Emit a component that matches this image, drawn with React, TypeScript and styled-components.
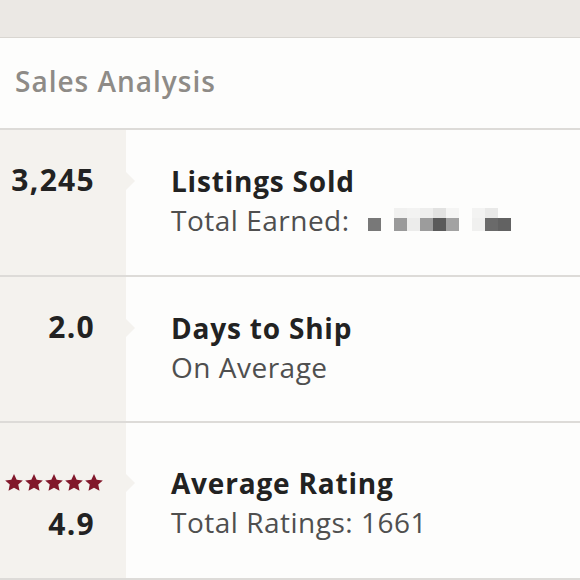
import React from 'react';
import styled, { createGlobalStyle } from 'styled-components';

const GlobalStyle = createGlobalStyle`
    html, body {
        margin: 0;
        padding: 0;
        background: #ffffff;
    }
    body {
        font-family: "Open Sans", Lato, Arial, sans-serif;
        -webkit-font-smoothing: antialiased;
    }
    * {
        box-sizing: border-box;
    }
`

const StyledPage = styled.div`
    width: 580px;
    height: 580px;
    overflow: hidden;
    display: flex;
    flex-direction: column;
`

const StyledTopBand = styled.div`
    height: 38px;
    flex-shrink: 0;
    background: #ebe8e4;
    border-bottom: 1px solid #d9d6d1;
`

const StyledHeader = styled.div`
    height: 92px;
    flex-shrink: 0;
    display: flex;
    align-items: center;
    padding: 0 0 4px 15px;
    background: #fdfdfc;
    border-bottom: 2px solid #dddbd8;
    font-size: 28px;
    font-weight: 600;
    letter-spacing: 1px;
    color: #8e8b87;
`

const StyledRow = styled.div<{ $height: number }>`
    display: grid;
    grid-template-columns: 126px 1fr;
    height: ${p => p.$height}px;
    border-bottom: 2px solid #dddbd8;
    flex-shrink: 0;
`

const StyledStatCell = styled.div<{ $top: number }>`
    position: relative;
    background: #f4f2ee;
    padding: ${p => p.$top}px 31px 0 0;
    text-align: right;

    &::after {
        content: '';
        position: absolute;
        right: -9px;
        top: ${p => p.$top + 12}px;
        border-top: 9px solid transparent;
        border-bottom: 9px solid transparent;
        border-left: 9px solid #f4f2ee;
    }
`

const StyledNumber = styled.div`
    font-size: 30px;
    font-weight: 700;
    line-height: 40px;
    letter-spacing: 1.3px;
    color: #222;
`

const StyledStars = styled.div`
    display: flex;
    justify-content: flex-end;
    margin-right: -9px;
    height: 42px;
    align-items: center;
`

const StyledInfoCell = styled.div<{ $top: number }>`
    padding: ${p => p.$top}px 0 0 45px;
    background: #fdfdfc;
`

const StyledTitle = styled.div`
    font-size: 28px;
    font-weight: 700;
    line-height: 42px;
    letter-spacing: 0.8px;
    color: #222;
`

const StyledSubtitle = styled.div`
    display: flex;
    align-items: center;
    font-size: 28px;
    font-weight: 400;
    line-height: 36px;
    letter-spacing: 0.5px;
    color: #4f4f4f;
`

const StyledMosaic = styled.div`
    display: grid;
    grid-template-columns: repeat(11, 13px);
    grid-template-rows: 10px 13px;
    margin-left: 18px;
    margin-top: -2px;
`

const StyledPixel = styled.span<{ $shade: string }>`
    background: ${p => p.$shade};
`

const mosaic = [
    '#fdfdfc', '#fdfdfc', '#f1f1f0', '#f3f3f2', '#eeeeed', '#e2e2e1', '#f5f5f4', '#fdfdfc', '#f3f3f2', '#e9e9e8', '#fdfdfc',
    '#787878', '#fdfdfc', '#9a9a9a', '#ececeb', '#9c9c9c', '#5a5a5a', '#a2a2a2', '#fdfdfc', '#f0f0ef', '#6a6a6a', '#626262',
]

const Star = () => (
    <svg width="20" height="20" viewBox="0 0 24 24">
        <path d="M12 1.2l3.2 6.8 7.4.9-5.5 5 1.5 7.4L12 17.6l-6.6 3.7 1.5-7.4-5.5-5 7.4-.9z" fill="#82192c" />
    </svg>
)

type Stat = {
    value: string;
    title: string;
    subtitle: string;
    height: number;
    top: number;
    stars?: boolean;
    redacted?: boolean;
}

const stats: Stat[] = [
    { value: '3,245', title: 'Listings Sold', subtitle: 'Total Earned:', height: 147, top: 30, redacted: true },
    { value: '2.0', title: 'Days to Ship', subtitle: 'On Average', height: 146, top: 30 },
    { value: '4.9', title: 'Average Rating', subtitle: 'Total Ratings: 1661', height: 157, top: 39, stars: true },
]

const App = () => {
    return (
        <StyledPage>
            <GlobalStyle />
            <StyledTopBand />
            <StyledHeader>Sales Analysis</StyledHeader>
            {stats.map((stat) => (
                <StyledRow key={stat.title} $height={stat.height}>
                    <StyledStatCell $top={stat.top}>
                        {stat.stars && (
                            <StyledStars>
                                <Star /><Star /><Star /><Star /><Star />
                            </StyledStars>
                        )}
                        <StyledNumber>{stat.value}</StyledNumber>
                    </StyledStatCell>
                    <StyledInfoCell $top={stat.top}>
                        <StyledTitle>{stat.title}</StyledTitle>
                        <StyledSubtitle>
                            {stat.subtitle}
                            {stat.redacted && (
                                <StyledMosaic>
                                    {mosaic.map((shade, i) => <StyledPixel key={i} $shade={shade} />)}
                                </StyledMosaic>
                            )}
                        </StyledSubtitle>
                    </StyledInfoCell>
                </StyledRow>
            ))}
        </StyledPage>
    );
};

export default App;
